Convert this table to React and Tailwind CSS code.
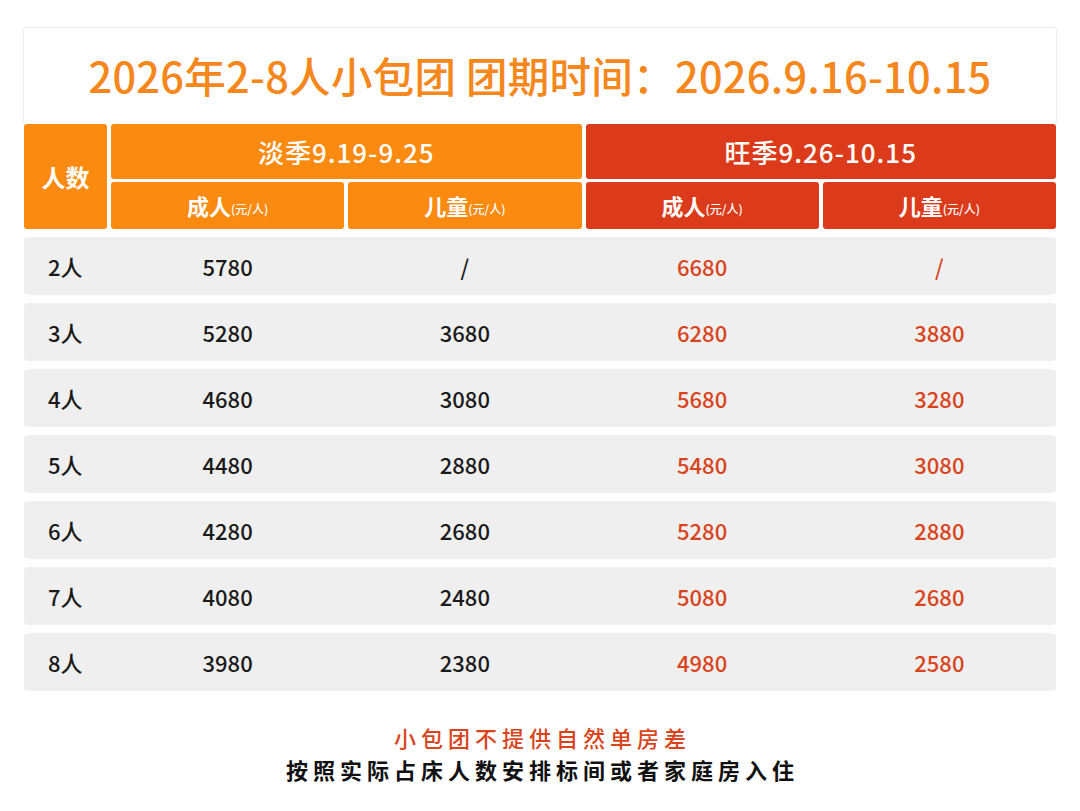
export default function App() {
  const rows = [
    ["2人", "5780", "/", "6680", "/"],
    ["3人", "5280", "3680", "6280", "3880"],
    ["4人", "4680", "3080", "5680", "3280"],
    ["5人", "4480", "2880", "5480", "3080"],
    ["6人", "4280", "2680", "5280", "2880"],
    ["7人", "4080", "2480", "5080", "2680"],
    ["8人", "3980", "2380", "4980", "2580"],
  ];
  const font = { fontFamily: '"Noto Sans CJK SC", "Noto Sans", sans-serif' };
  return (
    <div className="w-[1080px] h-[811px] bg-white pt-[27px] px-[24px]" style={font}>
      <div className="border border-[#ececec] rounded-[3px] border-b-0 -mx-[1px]">
        <div className="h-[96px] flex items-center justify-center text-[41.5px] font-medium text-[#f5871c] tracking-[0.3px] pb-[2px]">
          2026年2-8人小包团 团期时间：2026.9.16-10.15
        </div>
      </div>
      <div className="grid grid-cols-[83px_1fr_1fr_1fr_1fr] gap-x-[4px] gap-y-[3px] text-white">
        <div className="row-span-2 bg-[#fb8a10] rounded-[3px] flex items-center justify-center text-[24px] font-bold">人数</div>
        <div className="col-span-2 h-[55px] bg-[#fb8a10] rounded-[3px] flex items-center justify-center text-[26px] font-medium tracking-[1px]">淡季9.19-9.25</div>
        <div className="col-span-2 h-[55px] bg-[#db3b1a] rounded-[3px] flex items-center justify-center text-[26px] font-medium tracking-[1px]">旺季9.26-10.15</div>
        <div className="h-[47px] bg-[#fb8a10] rounded-[3px] flex items-center justify-center text-[22px] font-bold">成人<span className="text-[12px] font-medium mt-[6px]">(元/人)</span></div>
        <div className="h-[47px] bg-[#fb8a10] rounded-[3px] flex items-center justify-center text-[22px] font-bold">儿童<span className="text-[12px] font-medium mt-[6px]">(元/人)</span></div>
        <div className="h-[47px] bg-[#db3b1a] rounded-[3px] flex items-center justify-center text-[22px] font-bold">成人<span className="text-[12px] font-medium mt-[6px]">(元/人)</span></div>
        <div className="h-[47px] bg-[#db3b1a] rounded-[3px] flex items-center justify-center text-[22px] font-bold">儿童<span className="text-[12px] font-medium mt-[6px]">(元/人)</span></div>
      </div>
      <div className="flex flex-col gap-[8px] mt-[8px]">
        {rows.map((r) => (
          <div key={r[0]} className="grid grid-cols-[83px_1fr_1fr_1fr_1fr] gap-x-[4px] h-[58px] bg-[#efefef] rounded-[4px] items-center text-[22px] font-medium">
            <div className="pl-[24px] text-[#1a1a1a]">{r[0]}</div>
            <div className="text-center text-[#1a1a1a]">{r[1]}</div>
            <div className="text-center text-[#1a1a1a]">{r[2]}</div>
            <div className="text-center text-[#d9441c]">{r[3]}</div>
            <div className="text-center text-[#d9441c]">{r[4]}</div>
          </div>
        ))}
      </div>
      <div className="mt-[30px] flex flex-col items-center">
        <div className="text-[22px] leading-[32px] font-medium text-[#d9441c] tracking-[5px] pl-[5px]">小包团不提供自然单房差</div>
        <div className="text-[22px] leading-[32px] font-bold text-[#111111] tracking-[5px] pl-[5px]">按照实际占床人数安排标间或者家庭房入住</div>
      </div>
    </div>
  );
}
